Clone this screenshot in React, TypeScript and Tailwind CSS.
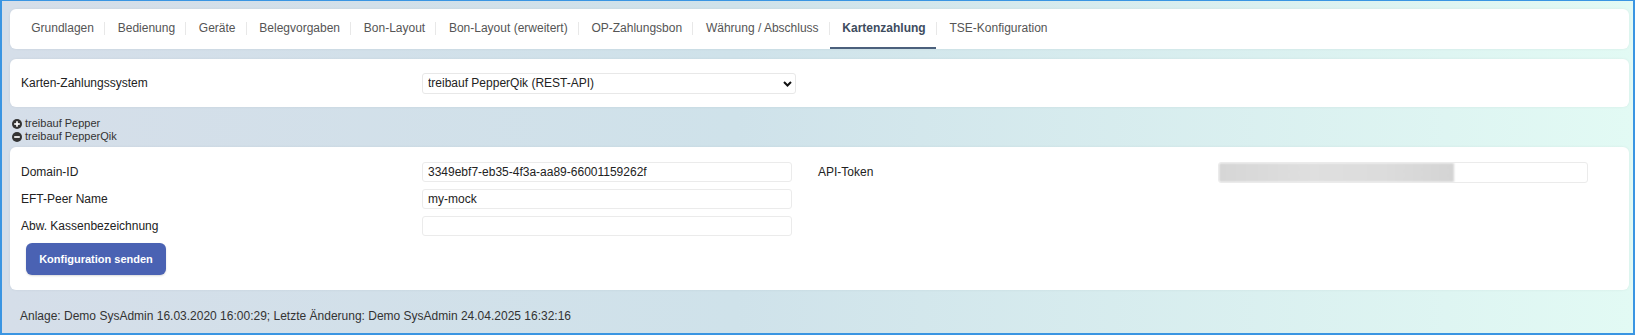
import React from 'react';

const tabs = [
  'Grundlagen',
  'Bedienung',
  'Geräte',
  'Belegvorgaben',
  'Bon-Layout',
  'Bon-Layout (erweitert)',
  'OP-Zahlungsbon',
  'Währung / Abschluss',
  'Kartenzahlung',
  'TSE-Konfiguration',
];
const activeTab = 'Kartenzahlung';

const CircleIcon = ({ open }: { open: boolean }) => (
  <svg width="10" height="10" viewBox="0 0 10 10" className="shrink-0">
    <circle cx="5" cy="5" r="5" fill="#333" />
    <path d="M2.2 5h5.6" stroke="#fff" strokeWidth="1.7" />
    {!open && <path d="M5 2.2v5.6" stroke="#fff" strokeWidth="1.7" />}
  </svg>
);

const Field = ({ value }: { value?: string }) => (
  <input
    readOnly
    defaultValue={value}
    className="h-[20px] w-[370px] rounded-[3px] border border-[#ebebeb] bg-white px-[5px] text-[12px] text-[#222] outline-none"
  />
);

export default function App() {
  return (
    <div className="h-[335px] w-full overflow-hidden border-x-2 border-t border-b-2 border-[#3a95e2] bg-[linear-gradient(90deg,#d5dee9_0%,#cfe2ea_45%,#e2faf4_100%)] pl-[8px] pr-[4px] pt-[8px] font-['Liberation_Sans',Arial,sans-serif] text-[12px] text-[#222]">
      {/* Tabs */}
      <div className="flex h-[40px] items-stretch rounded-md bg-white pl-[8.5px] shadow-[0_0_3px_rgba(0,0,0,0.06)]">
        {tabs.map((t, i) => (
          <React.Fragment key={t}>
            {i > 0 && <span className="mb-[1px] h-[13px] w-px self-center bg-[#e8e8e8]" />}
            <div
              className={`relative flex items-center pb-[3px] pl-[12.75px] pr-[10px] whitespace-nowrap ${
                t === activeTab ? 'font-bold text-[#3e4c5e]' : 'text-[#555]'
              }`}
            >
              {t}
              {t === activeTab && <span className="absolute bottom-0 left-0 right-0 h-[2px] bg-[#4b607c]" />}
            </div>
          </React.Fragment>
        ))}
      </div>

      {/* Zahlungssystem */}
      <div className="mt-[10px] flex h-[48px] items-center rounded-md bg-white pl-[11px] shadow-[0_0_3px_rgba(0,0,0,0.06)]">
        <div className="w-[401px]">Karten-Zahlungssystem</div>
        <div className="relative h-[21px] w-[374px]">
          <select className="h-full w-full appearance-none rounded-[3px] border border-[#e8e8e8] bg-white pl-[5px] text-[12px] text-[#222] outline-none">
            <option>treibauf PepperQik (REST-API)</option>
          </select>
          <svg
            width="9"
            height="6"
            viewBox="0 0 9 6"
            className="pointer-events-none absolute right-[4px] top-[8px]"
          >
            <path d="M1 1l3.5 3.5L8 1" fill="none" stroke="#111" strokeWidth="2" />
          </svg>
        </div>
      </div>

      {/* Collapsible groups */}
      <div className="mt-[10px] pl-[2px] text-[11px] leading-[13px] text-[#333]">
        <div className="flex items-center gap-[3px]">
          <CircleIcon open={false} />
          <span>treibauf Pepper</span>
        </div>
        <div className="flex items-center gap-[3px]">
          <CircleIcon open />
          <span>treibauf PepperQik</span>
        </div>
      </div>

      {/* PepperQik config */}
      <div className="mt-[4px] rounded-md bg-white pb-[15px] pl-[11px] pt-[15px] shadow-[0_0_3px_rgba(0,0,0,0.06)]">
        <div className="grid auto-rows-[20px] grid-cols-[401px_370px_26px_400px_370px] items-center gap-y-[7px]">
          <div>Domain-ID</div>
          <Field value="3349ebf7-eb35-4f3a-aa89-66001159262f" />
          <div />
          <div>API-Token</div>
          <div className="flex h-[21px] w-[370px] overflow-hidden rounded-[3px] border border-[#ebebeb] bg-white">
            <div className="h-full w-[235px] bg-[linear-gradient(90deg,#d6d6d6,#dfdfdf_40%,#dcdcdc_70%,#d4d4d4)] blur-[1px]" />
          </div>

          <div>EFT-Peer Name</div>
          <Field value="my-mock" />
          <div />
          <div />
          <div />

          <div>Abw. Kassenbezeichnung</div>
          <Field />
        </div>
        <button className="ml-[5px] mt-[7px] h-[32px] w-[140px] rounded-md bg-[#4a62b3] text-[11px] font-bold text-white shadow-[0_1px_2px_rgba(0,0,0,0.15)]">
          Konfiguration senden
        </button>
      </div>

      {/* Footer */}
      <div className="mt-[19px] pl-[10px] leading-[14px] text-[#333]">
        Anlage: Demo SysAdmin 16.03.2020 16:00:29; Letzte Änderung: Demo SysAdmin 24.04.2025 16:32:16
      </div>
    </div>
  );
}
